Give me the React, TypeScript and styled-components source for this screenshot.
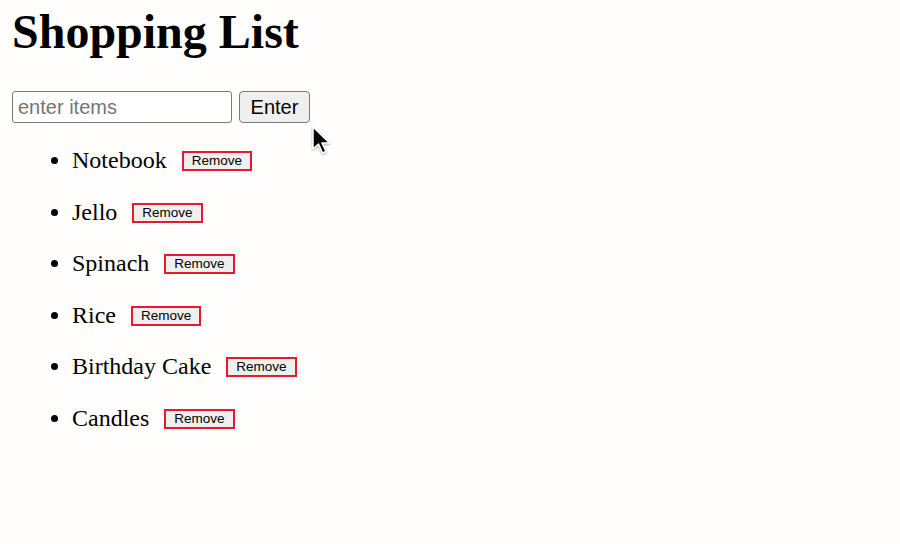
import * as React from 'react';
import styled, { createGlobalStyle } from 'styled-components';

const GlobalStyle = createGlobalStyle`
	html, body {
		margin: 0;
		padding: 0;
		background: #fffefc;
	}
	body {
		font-family: "Liberation Serif", "Times New Roman", serif;
		color: #000;
	}
`;

const Page = styled.div`
	position: relative;
	width: 900px;
	height: 544px;
	padding: 4px 12px 0;
	box-sizing: border-box;
	overflow: hidden;
`;

const Title = styled.h1`
	margin: 0 0 32px;
	font-size: 48px;
	font-weight: bold;
	line-height: normal;
`;

const EntryRow = styled.form`
	display: flex;
	align-items: center;
	gap: 7px;
	margin: 0;
`;

const ItemInput = styled.input`
	box-sizing: border-box;
	width: 220px;
	height: 32px;
	padding: 0 5px;
	border: 1.5px solid #7a7a7a;
	border-radius: 3px;
	background: #fff;
	font-family: "Liberation Sans", Arial, sans-serif;
	font-size: 20px;
	color: #000;
	outline: none;
	&::placeholder {
		color: #757575;
	}
`;

const EnterButton = styled.button`
	box-sizing: border-box;
	width: 71px;
	height: 32px;
	padding: 0;
	border: 1.5px solid #7a7a7a;
	border-radius: 4px;
	background: #efefef;
	font-family: "Liberation Sans", Arial, sans-serif;
	font-size: 20px;
	color: #000;
`;

const List = styled.ul`
	margin: 24px 0 0;
	padding-left: 60px;
	list-style: disc;
`;

const Item = styled.li`
	font-size: 24px;
	line-height: 27.6px;
	margin-bottom: 24px;
`;

const RemoveButton = styled.button`
	box-sizing: border-box;
	height: 20px;
	margin-left: 15px;
	padding: 0 8px;
	border: 2px solid #e8182f;
	border-radius: 0;
	background: #efefef;
	font-family: "Liberation Sans", Arial, sans-serif;
	font-size: 13.5px;
	line-height: 16px;
	color: #000;
	vertical-align: 3px;
`;

const Cursor = styled.svg`
	position: absolute;
	left: 310px;
	top: 125px;
	width: 24px;
	height: 30px;
	filter: drop-shadow(0 1px 1px rgba(0, 0, 0, 0.35));
`;

const items = ['Notebook', 'Jello', 'Spinach', 'Rice', 'Birthday Cake', 'Candles'];

const App: React.FC = () => (
	<Page>
		<GlobalStyle />
		<Title>Shopping List</Title>
		<EntryRow onSubmit={(e) => e.preventDefault()}>
			<ItemInput type="text" placeholder="enter items" />
			<EnterButton type="submit">Enter</EnterButton>
		</EntryRow>
		<List>
			{items.map((item) => (
				<Item key={item}>
					{item}
					<RemoveButton type="button">Remove</RemoveButton>
				</Item>
			))}
		</List>
		<Cursor viewBox="0 0 24 30">
			<path
				d="M3 2 L3 24 L8.5 19 L12.5 28 L16 26.5 L12 18 L19.5 18 Z"
				fill="#000"
				stroke="#fff"
				strokeWidth="1.5"
				strokeLinejoin="round"
			/>
		</Cursor>
	</Page>
);

export default App;
